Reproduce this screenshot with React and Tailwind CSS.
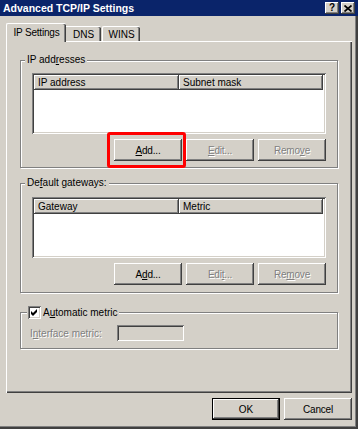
import React from "react";

const raised =
  "bg-[#d4d0c8] shadow-[inset_-1px_-1px_#404040,inset_1px_1px_#ffffff,inset_-2px_-2px_#808080,inset_2px_2px_#d4d0c8]";
const sunken =
  "shadow-[inset_1px_1px_#808080,inset_-1px_-1px_#ffffff,inset_2px_2px_#404040,inset_-2px_-2px_#d4d0c8]";
const dis = "text-[#808080] [text-shadow:1px_1px_0_#ffffff]";

function U({ children }) {
  return <span className="underline underline-offset-[1px]">{children}</span>;
}

function Btn({ children, disabled }) {
  return (
    <div
      className={`w-[68px] h-[22px] flex items-center justify-center ${raised} ${disabled ? dis : "text-black"}`}
    >
      <span className="tracking-[-0.2px]">{children}</span>
    </div>
  );
}

function ListView({ cols }) {
  return (
    <div className={`h-[61px] w-[294px] bg-white p-[2px] ${sunken}`}>
      <div className="flex h-[15px]">
        <div className={`w-[145px] h-full pl-[4px] flex items-center ${raised}`}>{cols[0]}</div>
        <div className={`w-[144px] h-full pl-[4px] flex items-center ${raised}`}>{cols[1]}</div>
      </div>
    </div>
  );
}

function Checkbox() {
  return (
    <div className={`w-[13px] h-[13px] bg-white flex items-center justify-center ${sunken}`}>
      <svg width="7" height="7" viewBox="0 0 7 7">
        <polygon points="0,2 2,4 6,0 6,3 2,7 0,5" fill="#000" />
      </svg>
    </div>
  );
}

const groupCls =
  "relative w-[318px] border border-[#808080] shadow-[inset_1px_1px_#ffffff,1px_1px_#ffffff]";

export default function App() {
  return (
    <div className="w-[358px] h-[429px] flex flex-col bg-[#d4d0c8] font-['Liberation_Sans',Arial,sans-serif] text-[10px] text-black overflow-hidden">
      {/* Title bar */}
      <div className="h-[16px] bg-[#0a246a] flex items-center pl-[3px] pr-[3px]">
        <span className="text-white font-bold text-[10.5px] leading-none">Advanced TCP/IP Settings</span>
        <div className="ml-auto flex gap-[2px]">
          <div className={`w-[14px] h-[12px] flex items-center justify-center ${raised}`}>
            <span className="font-bold text-[10px] leading-none text-black">?</span>
          </div>
          <div className={`w-[14px] h-[12px] flex items-center justify-center ${raised}`}>
            <svg width="8" height="7" viewBox="0 0 8 7">
              <path d="M0.5 0.5 L7.5 6.5 M7.5 0.5 L0.5 6.5" stroke="#000" strokeWidth="1.7" />
            </svg>
          </div>
        </div>
      </div>

      {/* Body */}
      <div className="flex-1 flex flex-col pt-[7px] pl-[6px] shadow-[inset_-2px_-2px_#404040,inset_-3px_-3px_#808080]">
        {/* Tabs */}
        <div className="flex items-end h-[18px]">
          <div className="relative z-10 -mb-[1px] w-[60px] h-[19px] bg-[#d4d0c8] border-l border-t border-white rounded-t-[2px] shadow-[inset_-1px_0_#404040,inset_-2px_0_#808080] flex items-center justify-center pb-[1px]">
            <span className="tracking-[-0.2px]">IP Settings</span>
          </div>
          <div className="w-[35px] h-[15px] border-t border-white rounded-tr-[2px] shadow-[inset_-1px_0_#404040,inset_-2px_0_#808080] flex items-center justify-center">
            DNS
          </div>
          <div className="ml-[1px] w-[38px] h-[15px] border-l border-t border-white rounded-t-[2px] shadow-[inset_-1px_0_#404040,inset_-2px_0_#808080] flex items-center justify-center">
            WINS
          </div>
        </div>

        {/* Panel */}
        <div className="w-[346px] h-[352px] border-l border-t border-white shadow-[inset_-1px_-1px_#404040,inset_-2px_-2px_#808080] pl-[13px] pt-[18px] flex flex-col">
          {/* IP addresses */}
          <div className={`${groupCls} pt-[12px] pb-[6px] px-[11px]`}>
            <div className="absolute -top-[7px] left-[4px] px-[2px] bg-[#d4d0c8] leading-[12px]">
              IP add<U>r</U>esses
            </div>
            <ListView cols={["IP address", "Subnet mask"]} />
            <div className="mt-[5px] flex justify-end gap-[4px]">
              <div className="relative">
                <Btn>
                  <U>A</U>dd...
                </Btn>
                <div className="absolute -left-[7px] -top-[7px] -right-[4px] -bottom-[7px] border-[3px] border-[#ff0000] rounded-[3px]" />
              </div>
              <Btn disabled>
                <U>E</U>dit...
              </Btn>
              <Btn disabled>
                Remo<U>v</U>e
              </Btn>
            </div>
          </div>

          {/* Default gateways */}
          <div className={`${groupCls} mt-[15px] pt-[13px] pb-[7px] px-[11px]`}>
            <div className="absolute -top-[7px] left-[4px] px-[2px] bg-[#d4d0c8] leading-[12px]">
              De<U>f</U>ault gateways:
            </div>
            <ListView cols={["Gateway", "Metric"]} />
            <div className="mt-[5px] flex justify-end gap-[4px]">
              <Btn>
                A<U>d</U>d...
              </Btn>
              <Btn disabled>
                Edi<U>t</U>...
              </Btn>
              <Btn disabled>
                Re<U>m</U>ove
              </Btn>
            </div>
          </div>

          {/* Automatic metric */}
          <div className={`${groupCls} mt-[19px] pt-[12px] pb-[7px] pl-[9px]`}>
            <div className="absolute -top-[7px] left-[6px] pl-[1px] pr-[2px] bg-[#d4d0c8] flex items-center gap-[2px] leading-[13px]">
              <Checkbox />
              <span>
                A<U>u</U>tomatic metric
              </span>
            </div>
            <div className="flex items-center h-[16px]">
              <div className={`w-[87px] ${dis}`}>
                I<U>n</U>terface metric:
              </div>
              <div className={`w-[67px] h-[16px] bg-[#d4d0c8] ${sunken}`} />
            </div>
          </div>
        </div>

        {/* OK / Cancel */}
        <div className="mt-[5px] flex justify-end gap-[4px] pr-[6px]">
          <div className="w-[68px] h-[22px] border border-black bg-[#d4d0c8] shadow-[inset_-1px_-1px_#404040,inset_1px_1px_#ffffff,inset_-2px_-2px_#808080] flex items-center justify-center">
            OK
          </div>
          <Btn>Cancel</Btn>
        </div>
      </div>
    </div>
  );
}
